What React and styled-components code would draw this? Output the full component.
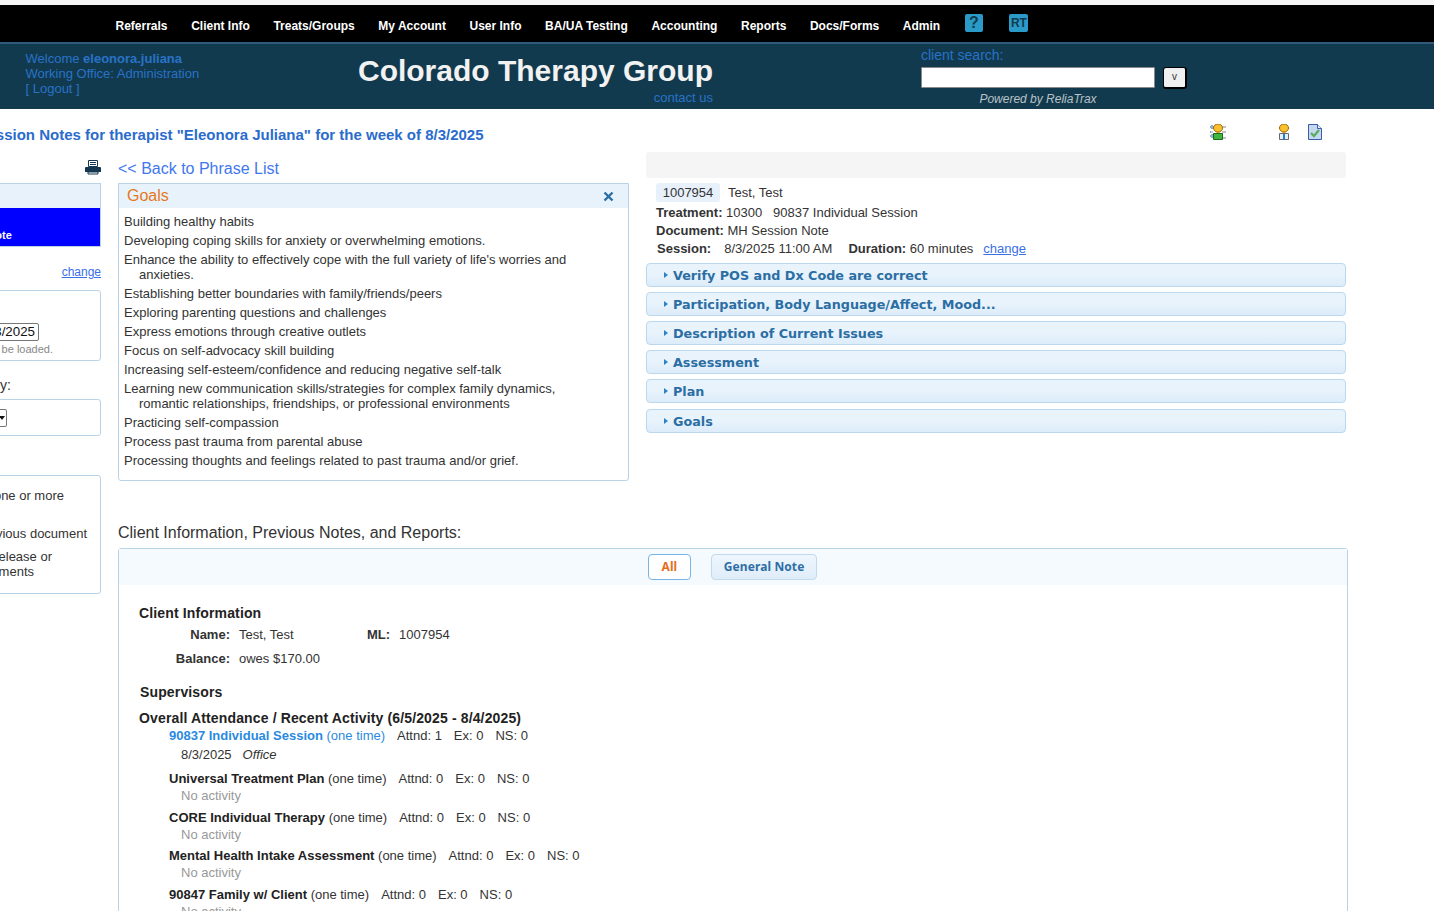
import React from "react";
import styled, { createGlobalStyle } from "styled-components";

const Global = createGlobalStyle`
  html, body {
    margin: 0;
    padding: 0;
    height: 911px;
    overflow: hidden;
    background: #fff;
    font-family: "Liberation Sans", Arial, sans-serif;
    color: #333;
  }
`;

const TopStrip = styled.div`
  height: 5px;
  background: #f5f5f5;
`;

const Nav = styled.div`
  height: 37px;
  background: #000;
  display: flex;
  align-items: flex-start;
  padding-left: 115.5px;
  gap: 23.6px;
`;

const NavItem = styled.a`
  color: #fff;
  font-size: 12px;
  font-weight: bold;
  line-height: 14px;
  margin-top: 14px;
  white-space: nowrap;
`;

const NavBadge = styled.div`
  width: ${(p) => p.$width}px;
  height: 18px;
  margin-top: 9px;
  margin-left: ${(p) => p.$left}px;
  border-radius: 2px;
  background: #2a9bc9;
  color: #123a4e;
  font-size: ${(p) => p.$size}px;
  font-weight: bold;
  line-height: 18px;
  text-align: center;
`;

const Header = styled.div`
  height: 65px;
  border-top: 2px solid #2f5a78;
  background: #123a4e;
  display: flex;
  color: #2872c8;
`;

const Welcome = styled.div`
  width: 333px;
  padding: 7px 0 0 25.5px;
  box-sizing: border-box;
  font-size: 13px;
  line-height: 15px;
`;

const Brand = styled.div`
  width: 380px;
  display: flex;
  flex-direction: column;
  align-items: flex-end;
`;

const BrandName = styled.div`
  color: #f2f2f2;
  font-size: 30px;
  font-weight: bold;
  line-height: 34px;
  margin-top: 10px;
  white-space: nowrap;
`;

const Contact = styled.a`
  font-size: 13px;
  line-height: 15px;
  margin-top: 2px;
`;

const Search = styled.div`
  margin-left: 208px;
  width: 270px;
`;

const SearchLabel = styled.div`
  font-size: 14px;
  line-height: 16px;
  margin-top: 3px;
`;

const SearchRow = styled.div`
  display: flex;
  gap: 8px;
  margin-top: 4px;
`;

const SearchInput = styled.div`
  width: 232px;
  height: 19px;
  background: #fff;
  border: 1px solid #8a8a8a;
  border-radius: 1px;
`;

const SearchButton = styled.div`
  width: 21px;
  height: 19px;
  background: #f0f0f0;
  border: 1px solid #000;
  border-width: 1px 2px 2px 1px;
  border-radius: 3px;
  color: #333;
  font-size: 10px;
  line-height: 17px;
  text-align: center;
`;

const Powered = styled.div`
  width: 234px;
  text-align: center;
  color: #b8c2c7;
  font-size: 12px;
  font-style: italic;
  line-height: 14px;
  margin-top: 3px;
`;

const Main = styled.div`
  margin-left: -149px;
  width: 1583px;
`;

const TitleRow = styled.div`
  height: 43px;
  display: flex;
`;

const PageTitle = styled.div`
  margin: 17px 0 0 126.5px;
  width: 1232.5px;
  color: #2a6ccc;
  font-size: 15px;
  font-weight: bold;
  line-height: 17px;
  white-space: nowrap;
`;

const TitleIcon = styled.div`
  margin: 15px 0 0 ${(p) => p.$left}px;
  width: 16px;
  height: 16px;
`;

const Columns = styled.div`
  display: flex;
  height: 372px;
`;

const Side = styled.div`
  width: 250px;
  margin-right: 17px;
`;

const PrintRow = styled.div`
  height: 31px;
  display: flex;
  justify-content: flex-end;
  padding-top: 8px;
  box-sizing: border-box;
`;

const SideHead = styled.div`
  height: 62px;
  border: 1px solid #b9d3e6;
  background: #e8f2fb;
  display: flex;
  align-items: flex-end;
`;

const SideBlue = styled.div`
  height: 38px;
  width: 100%;
  box-sizing: border-box;
  background: #00f;
  color: #fff;
  font-size: 11px;
  font-weight: bold;
  padding: 21px 0 0 70px;
  line-height: 13px;
`;

const SideLink = styled.a`
  display: block;
  margin-top: 17px;
  height: 26px;
  text-align: right;
  color: #3a6fe8;
  font-size: 12px;
  line-height: 16px;
  text-decoration: underline;
`;

const SideBox = styled.div`
  border: 1px solid #b9d3e6;
  border-radius: 3px;
  height: ${(p) => p.$height}px;
  box-sizing: border-box;
  margin-top: ${(p) => p.$top || 0}px;
  overflow: hidden;
`;

const DateField = styled.div`
  margin: 32px 61px 0 auto;
  width: 90px;
  height: 18px;
  border: 1px solid #767676;
  border-radius: 2px;
  box-sizing: border-box;
  text-align: right;
  color: #111;
  font-size: 13.33px;
  line-height: 16px;
  padding-right: 3px;
  white-space: nowrap;
`;

const Hint = styled.div`
  text-align: right;
  padding-right: 47px;
  margin-top: 1px;
  color: #888;
  font-size: 11px;
  line-height: 14px;
`;

const SideLabel = styled.div`
  text-align: right;
  padding-right: 90px;
  margin-top: 16px;
  font-size: 14px;
  line-height: 16px;
  height: 22px;
`;

const SelectField = styled.div`
  margin: 9px 93px 0 auto;
  width: 60px;
  height: 18px;
  border: 1px solid #767676;
  border-radius: 2px;
  box-sizing: border-box;
  display: flex;
  justify-content: flex-end;
  align-items: center;
  padding-right: 1px;
`;

const Caret = styled.span`
  width: 0;
  height: 0;
  border-left: 3px solid transparent;
  border-right: 3px solid transparent;
  border-top: 4px solid #111;
`;

const SideLine = styled.div`
  text-align: right;
  padding-right: ${(p) => p.$right}px;
  margin-top: ${(p) => p.$top}px;
  font-size: 13px;
  line-height: 15px;
  white-space: nowrap;
`;

const Phrases = styled.div`
  width: 511px;
  margin-right: 17px;
`;

const BackLink = styled.a`
  display: block;
  height: 31px;
  padding-top: 8px;
  box-sizing: border-box;
  color: #3f78ee;
  font-size: 16px;
  line-height: 18px;
`;

const GoalsPanel = styled.div`
  height: 298px;
  box-sizing: border-box;
  border: 1px solid #b9d3e6;
  border-radius: 0 0 3px 3px;
`;

const GoalsHead = styled.div`
  height: 24px;
  background: #e8f2fb;
  display: flex;
  justify-content: space-between;
  align-items: center;
  padding: 0 14px 0 8px;
`;

const GoalsTitle = styled.div`
  color: #e5781c;
  font-size: 16px;
`;

const GoalsList = styled.div`
  padding: 6px 40px 0 5px;
`;

const Goal = styled.div`
  font-size: 13px;
  line-height: 15px;
  padding: 0 0 4px 15px;
  text-indent: -15px;
`;

const Session = styled.div`
  width: 700px;
`;

const GrayBar = styled.div`
  height: 26px;
  background: #f5f5f5;
  border-radius: 3px;
`;

const ClientRow = styled.div`
  display: flex;
  align-items: center;
  gap: 8px;
  margin: 5px 0 2px 10px;
  font-size: 13px;
  height: 19px;
`;

const ClientBadge = styled.span`
  background: #e8f0fb;
  border-radius: 3px;
  width: 64px;
  text-align: center;
  line-height: 19px;
`;

const InfoLine = styled.div`
  font-size: 13px;
  line-height: 18px;
  margin-left: ${(p) => p.$left || 10}px;
  white-space: pre;
`;

const Gap = styled.span`
  margin-left: ${(p) => p.$left}px;
`;

const Inline = styled.a`
  color: #3a6fe8;
  text-decoration: underline;
  margin-left: 10px;
`;

const Accordion = styled.div`
  height: 24px;
  box-sizing: border-box;
  margin-top: ${(p) => p.$top}px;
  border: 1px solid #bcd8ee;
  border-radius: 4px;
  background: linear-gradient(#e8f3fc 0%, #e8f3fc 50%, #dcecf9 100%);
  display: flex;
  align-items: center;
  padding-left: 17px;
  color: #2b6ea3;
  font-family: "DejaVu Sans", sans-serif;
  font-size: 12.75px;
  font-weight: bold;
`;

const Arrow = styled.span`
  width: 0;
  height: 0;
  border-top: 3.5px solid transparent;
  border-bottom: 3.5px solid transparent;
  border-left: 4px solid #2b82c9;
  margin-right: 5px;
`;

const InfoTitle = styled.div`
  margin: 0 0 0 267px;
  height: 24px;
  font-size: 16px;
  line-height: 18px;
`;

const InfoPanel = styled.div`
  margin-left: 267px;
  width: 1230px;
  height: 400px;
  box-sizing: border-box;
  border: 1px solid #b9d3e6;
  border-radius: 3px 3px 0 0;
`;

const Tabs = styled.div`
  height: 36px;
  background: #f5faff;
  display: flex;
  padding: 5px 0 0 529px;
  gap: 20px;
  box-sizing: border-box;
`;

const Tab = styled.div`
  height: 26px;
  box-sizing: border-box;
  padding: 0 ${(p) => (p.$active ? 12.5 : 12)}px;
  border: 1px solid ${(p) => (p.$active ? "#78b5e6" : "#c3d9ec")};
  border-radius: 4px;
  background: ${(p) => (p.$active ? "#fff" : "linear-gradient(#eef6fd, #dfedf9)")};
  color: ${(p) => (p.$active ? "#e5701c" : "#2f6ea5")};
  font-family: "Noto Sans", sans-serif;
  font-size: 12px;
  letter-spacing: 0.1px;
  font-weight: bold;
  line-height: 23px;
`;

const InfoBody = styled.div`
  padding: 20px 0 0 20px;
  font-size: 13px;
`;

const SectionHead = styled.div`
  font-size: 14px;
  font-weight: bold;
  letter-spacing: 0.14px;
  color: #222;
  line-height: 16px;
  margin-top: ${(p) => p.$top || 0}px;
  margin-left: ${(p) => p.$left || 0}px;
`;

const FieldRow = styled.div`
  display: flex;
  height: 24px;
  margin-top: ${(p) => p.$top || 0}px;
  line-height: 14px;
`;

const FieldLabel = styled.b`
  width: ${(p) => p.$width}px;
  text-align: right;
  color: #333;
`;

const FieldValue = styled.span`
  width: ${(p) => p.$width}px;
  margin-left: 9px;
`;

const Activity = styled.div`
  margin: ${(p) => p.$top}px 0 0 30px;
  line-height: 15px;
  font-size: 13px;
  color: ${(p) => (p.$link ? "#2a8ae0" : "#333")};
  white-space: pre;
  b {
    color: ${(p) => (p.$link ? "#2a8ae0" : "#222")};
  }
`;

const Stat = styled.span`
  color: #333;
  margin-left: 12px;
`;

const ActivitySub = styled.div`
  margin: ${(p) => p.$top}px 0 0 42px;
  line-height: 15px;
  color: ${(p) => (p.$muted ? "#999" : "#333")};
  white-space: pre;
  em {
    margin-left: 11px;
  }
`;

const PersonIcon = ({ shirt, lines }) => (
  <svg width="16" height="16" viewBox="0 0 16 16">
    {lines && (
      <g strokeWidth="1">
        <path d="M0 3h4M2 1v4M0 12h4M2 10v4M0 8h3" stroke="#1a4f9c" strokeDasharray="1 0.5" />
        <path d="M12 3h4M12 8h4M12 14h4" stroke="#888" />
      </g>
    )}
    <ellipse cx="8" cy="4" rx="4.5" ry="4" fill="#fbc02d" stroke="#9a6a00" />
    <path d="M6.5 8h3v2h-3z" fill="#e09a10" />
    <path d="M3.5 9.5h9v6h-9z" fill={shirt} stroke={lines ? "#1b6b1b" : "#667"} />
    {!lines && <path d="M8 10v5.5" stroke="#1f7fd0" strokeWidth="2" />}
  </svg>
);

const DocCheckIcon = () => (
  <svg width="16" height="16" viewBox="0 0 16 16">
    <path d="M1.5.5h9l4 4v11h-13z" fill="#c5d8f0" stroke="#3a5fa8" />
    <path d="M10.5.5v4h4" fill="#eaf1fb" stroke="#3a5fa8" />
    <path d="M4 9l3 3 5-6" fill="none" stroke="#5cab5c" strokeWidth="2.2" />
  </svg>
);

const PrinterIcon = () => (
  <svg width="16" height="16" viewBox="0 0 16 16">
    <path d="M3.5.5h9v6h-9z" fill="#fff" stroke="#14384f" />
    <path d="M5 2.5h6M5 4.5h6" stroke="#14384f" />
    <path d="M1 7h14a1 1 0 0 1 1 1v4H0V8a1 1 0 0 1 1-1z" fill="#14384f" />
    <path d="M3 12h10v2H3z" fill="#fff" stroke="#14384f" />
  </svg>
);

const CloseIcon = () => (
  <svg width="11" height="11" viewBox="0 0 11 11">
    <path d="M1.5 1.5l8 8M9.5 1.5l-8 8" stroke="#2b6ea3" strokeWidth="2.4" />
  </svg>
);

const navItems = ["Referrals", "Client Info", "Treats/Groups", "My Account", "User Info", "BA/UA Testing", "Accounting", "Reports", "Docs/Forms", "Admin"];

const goals = [
  "Building healthy habits",
  "Developing coping skills for anxiety or overwhelming emotions.",
  "Enhance the ability to effectively cope with the full variety of life's worries and anxieties.",
  "Establishing better boundaries with family/friends/peers",
  "Exploring parenting questions and challenges",
  "Express emotions through creative outlets",
  "Focus on self-advocacy skill building",
  "Increasing self-esteem/confidence and reducing negative self-talk",
  "Learning new communication skills/strategies for complex family dynamics, romantic relationships, friendships, or professional environments",
  "Practicing self-compassion",
  "Process past trauma from parental abuse",
  "Processing thoughts and feelings related to past trauma and/or grief.",
];

const sections = [
  ["Verify POS and Dx Code are correct", 5],
  ["Participation, Body Language/Affect, Mood...", 5],
  ["Description of Current Issues", 5],
  ["Assessment", 5],
  ["Plan", 5],
  ["Goals", 6],
];

const activities = [
  ["Universal Treatment Plan", 9],
  ["CORE Individual Therapy", 7],
  ["Mental Health Intake Assessment", 6],
  ["90847 Family w/ Client", 7],
];

const Stats = ({ attended }) => (
  <>
    <Stat>Attnd: {attended}</Stat>
    <Stat>Ex: 0</Stat>
    <Stat>NS: 0</Stat>
  </>
);

const App = () => {
  return (
    <>
      <Global />
      <TopStrip />
      <Nav>
        {navItems.map((item) => (
          <NavItem key={item}>{item}</NavItem>
        ))}
        <NavBadge $size={16} $width={18} $left={1}>?</NavBadge>
        <NavBadge $size={12} $width={19} $left={3}>RT</NavBadge>
      </Nav>
      <Header>
        <Welcome>
          Welcome <b>eleonora.juliana</b>
          <br />
          Working Office: Administration
          <br />[ Logout ]
        </Welcome>
        <Brand>
          <BrandName>Colorado Therapy Group</BrandName>
          <Contact>contact us</Contact>
        </Brand>
        <Search>
          <SearchLabel>client search:</SearchLabel>
          <SearchRow>
            <SearchInput />
            <SearchButton>v</SearchButton>
          </SearchRow>
          <Powered>Powered by ReliaTrax</Powered>
        </Search>
      </Header>
      <Main>
        <TitleRow>
          <PageTitle>Session Notes for therapist "Eleonora Juliana" for the week of 8/3/2025</PageTitle>
          <TitleIcon $left={0}><PersonIcon shirt="#3fb53f" lines /></TitleIcon>
          <TitleIcon $left={50}><PersonIcon shirt="#e8eef5" /></TitleIcon>
          <TitleIcon $left={15}><DocCheckIcon /></TitleIcon>
        </TitleRow>
        <Columns>
          <Side>
            <PrintRow><PrinterIcon /></PrintRow>
            <SideHead>
              <SideBlue>MH Session Note</SideBlue>
            </SideHead>
            <SideLink>change</SideLink>
            <SideBox $height={71}>
              <DateField>8/3/2025</DateField>
              <Hint>Notes will be loaded.</Hint>
            </SideBox>
            <SideLabel>Show by:</SideLabel>
            <SideBox $height={37}>
              <SelectField><Caret /></SelectField>
            </SideBox>
            <SideBox $height={119} $top={39}>
              <SideLine $right={36} $top={12}>Select one or more</SideLine>
              <SideLine $right={13} $top={23}>Copy from previous document</SideLine>
              <SideLine $right={48} $top={8}>Please release or</SideLine>
              <SideLine $right={66} $top={0}>sign documents</SideLine>
            </SideBox>
          </Side>
          <Phrases>
            <BackLink>{"<< Back to Phrase List"}</BackLink>
            <GoalsPanel>
              <GoalsHead>
                <GoalsTitle>Goals</GoalsTitle>
                <CloseIcon />
              </GoalsHead>
              <GoalsList>
                {goals.map((goal) => (
                  <Goal key={goal}>{goal}</Goal>
                ))}
              </GoalsList>
            </GoalsPanel>
          </Phrases>
          <Session>
            <GrayBar />
            <ClientRow>
              <ClientBadge>1007954</ClientBadge>
              <span>Test, Test</span>
            </ClientRow>
            <InfoLine><b>Treatment:</b> 10300   90837 Individual Session</InfoLine>
            <InfoLine><b>Document:</b> MH Session Note</InfoLine>
            <InfoLine $left={11}>
              <b>Session:</b>
              <Gap $left={13}>8/3/2025 11:00 AM</Gap>
              <Gap $left={16}><b>Duration:</b> 60 minutes</Gap>
              <Inline>change</Inline>
            </InfoLine>
            {sections.map(([label, top]) => (
              <Accordion key={label} $top={top}>
                <Arrow />
                {label}
              </Accordion>
            ))}
          </Session>
        </Columns>
        <InfoTitle>Client Information, Previous Notes, and Reports:</InfoTitle>
        <InfoPanel>
          <Tabs>
            <Tab $active>All</Tab>
            <Tab>General Note</Tab>
          </Tabs>
          <InfoBody>
            <SectionHead>Client Information</SectionHead>
            <FieldRow $top={7}>
              <FieldLabel $width={91}>Name:</FieldLabel>
              <FieldValue $width={72}>Test, Test</FieldValue>
              <FieldLabel $width={79}>ML:</FieldLabel>
              <FieldValue $width={80}>1007954</FieldValue>
            </FieldRow>
            <FieldRow>
              <FieldLabel $width={91}>Balance:</FieldLabel>
              <FieldValue $width={120}>owes $170.00</FieldValue>
            </FieldRow>
            <SectionHead $top={8} $left={1}>Supervisors</SectionHead>
            <SectionHead $top={10}>Overall Attendance / Recent Activity (6/5/2025 - 8/4/2025)</SectionHead>
            <Activity $link $top={2}>
              <b>90837 Individual Session</b> (one time)
              <Stats attended={1} />
            </Activity>
            <ActivitySub $top={4}>8/3/2025<em>Office</em></ActivitySub>
            {activities.map(([name, top]) => (
              <React.Fragment key={name}>
                <Activity $top={top}>
                  <b>{name}</b> (one time)
                  <Stats attended={0} />
                </Activity>
                <ActivitySub $muted $top={2}>No activity</ActivitySub>
              </React.Fragment>
            ))}
          </InfoBody>
        </InfoPanel>
      </Main>
    </>
  );
};

export default App;
